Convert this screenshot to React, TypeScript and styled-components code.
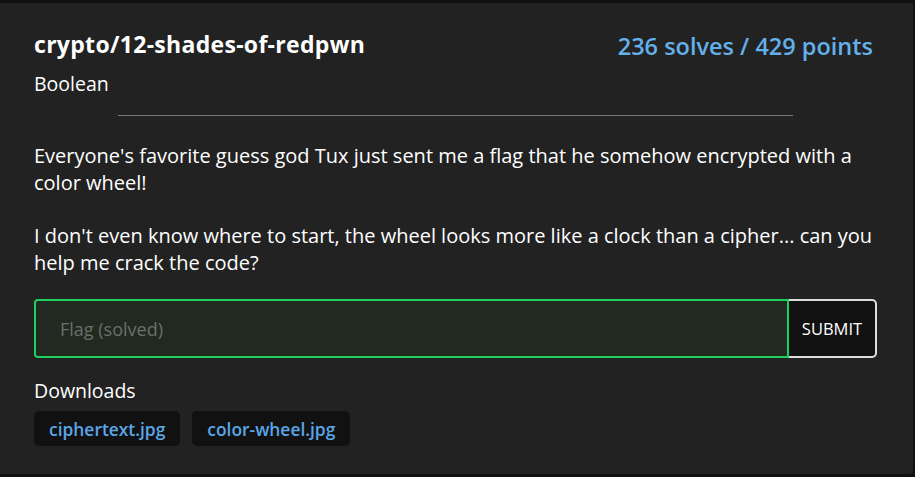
import React from "react";
import styled, { createGlobalStyle } from "styled-components";

const Global = createGlobalStyle`
  html, body { margin: 0; padding: 0; background: #111111; }
  body { font-family: "Open Sans", "Noto Sans", sans-serif; color: #ffffff; }
  * { box-sizing: border-box; }
`;

const Page = styled.div`
  padding-top: 3px;
  width: 915px;
  height: 477px;
`;

const Card = styled.div`
  width: 913px;
  height: 471px;
  background: #222222;
  border-radius: 0 0 4px 0;
  padding: 25px 36px 0 34px;
`;

const Header = styled.div`
  display: flex;
  justify-content: space-between;
  align-items: flex-start;
`;

const Title = styled.h1`
  margin: 0;
  font-size: 23px;
  font-weight: 700;
  line-height: 32px;
  letter-spacing: 0.3px;
`;

const Score = styled.div`
  margin-top: 2px;
  padding-right: 4px;
  font-size: 23.5px;
  font-weight: 600;
  line-height: 32px;
  color: #64b0ea;
`;

const Author = styled.div`
  margin-top: 8px;
  font-size: 19.5px;
  line-height: 27px;
`;

const Divider = styled.hr`
  width: 80%;
  margin: 18px auto 0;
  border: none;
  border-top: 1px solid #777777;
`;

const Description = styled.div`
  margin-top: 26px;
  font-size: 20px;
  line-height: 27px;
  p { margin: 0 0 26px; }
  p:last-child { margin-bottom: 0; }
`;

const FlagRow = styled.form`
  display: flex;
  height: 59px;
  margin-top: 23px;
`;

const FlagInput = styled.input`
  flex: 1;
  height: 100%;
  background: #212a21;
  border: 2px solid #1ed05b;
  border-radius: 4px 0 0 4px;
  padding: 0 24px;
  font-family: inherit;
  font-size: 18px;
  color: #ffffff;
  outline: none;
  &::placeholder { color: #6b6f6b; }
`;

const SubmitButton = styled.button`
  width: 88px;
  height: 100%;
  background: #111111;
  border: 2px solid #dddddd;
  border-left: none;
  border-radius: 0 5px 5px 0;
  color: #ffffff;
  font-family: inherit;
  font-size: 16.5px;
  padding: 0;
`;

const DownloadsLabel = styled.div`
  margin-top: 19px;
  font-size: 19.5px;
  line-height: 27px;
`;

const Chips = styled.div`
  display: flex;
  gap: 12px;
  margin-top: 7px;
`;

const Chip = styled.a`
  display: inline-flex;
  align-items: center;
  height: 35px;
  padding: 0 15px;
  background: #111111;
  border-radius: 5px;
  color: #5aa6e6;
  font-size: 17.4px;
  font-weight: 600;
  text-decoration: none;
`;

export default function App() {
  return (
    <Page>
      <Global />
      <Card>
        <Header>
          <Title>crypto/12-shades-of-redpwn</Title>
          <Score>236 solves / 429 points</Score>
        </Header>
        <Author>Boolean</Author>
        <Divider />
        <Description>
          <p>
            Everyone's favorite guess god Tux just sent me a flag that he somehow encrypted with a color wheel!
          </p>
          <p>
            I don't even know where to start, the wheel looks more like a clock than a cipher... can you help me crack the code?
          </p>
        </Description>
        <FlagRow onSubmit={(e) => e.preventDefault()}>
          <FlagInput placeholder="Flag (solved)" />
          <SubmitButton type="submit">SUBMIT</SubmitButton>
        </FlagRow>
        <DownloadsLabel>Downloads</DownloadsLabel>
        <Chips>
          <Chip href="#">ciphertext.jpg</Chip>
          <Chip href="#">color-wheel.jpg</Chip>
        </Chips>
      </Card>
    </Page>
  );
}
